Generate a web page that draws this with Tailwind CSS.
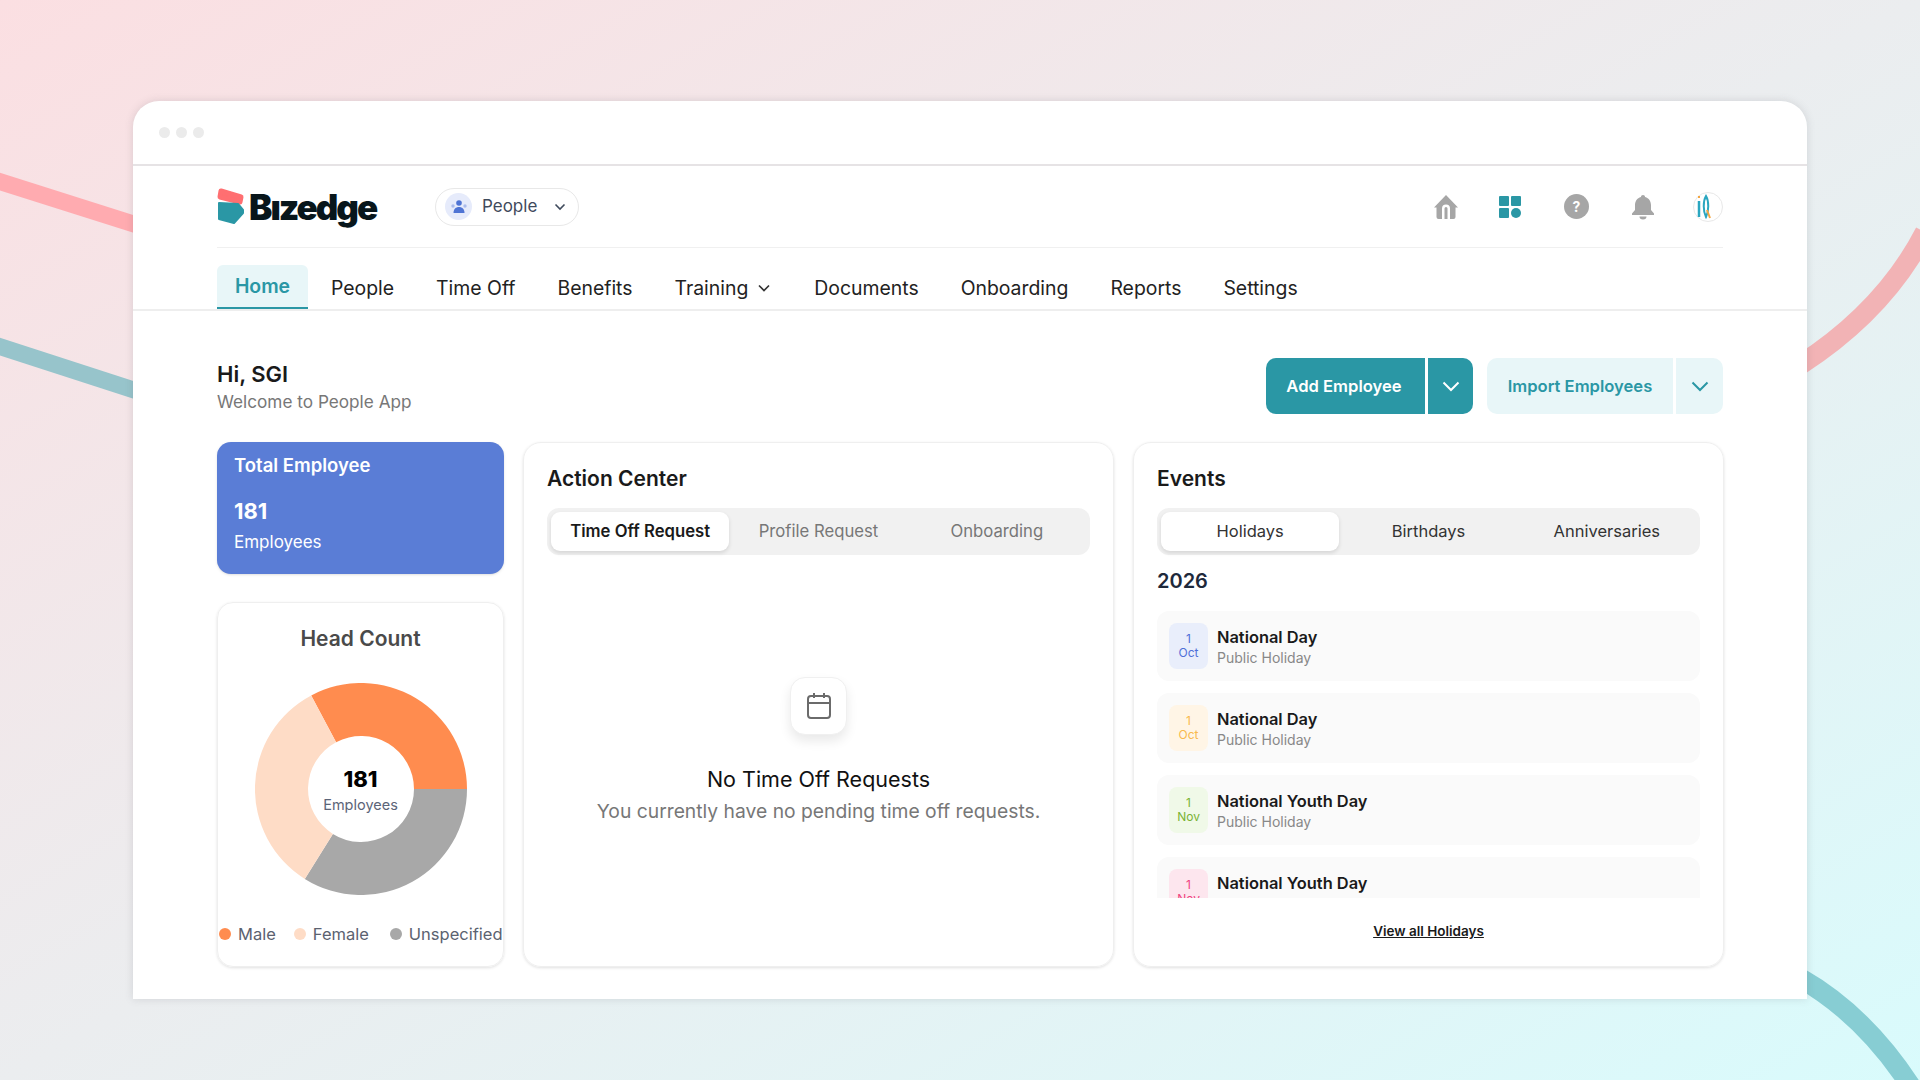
<!DOCTYPE html>
<html lang="en">
<head>
    <meta charset="UTF-8">
    <meta name="viewport" content="width=device-width, initial-scale=1.0">
    <title>Bizedge People</title>
    <script src="https://cdn.jsdelivr.net/npm/@tailwindcss/browser@4"></script>
</head>
<body class="relative w-[1920px] h-[1080px] overflow-hidden bg-linear-to-br from-[#fbdfe2] via-[#ebedef] to-[#d9fbfc] font-['Inter',sans-serif] text-[#1a1a1a]">
    <!-- Background stripes -->
    <svg class="absolute inset-0" width="1920" height="1080" viewBox="0 0 1920 1080" fill="none">
        <path d="M-5 180L140 226" stroke="#ffabb0" stroke-width="17"/>
        <path d="M-5 345L140 392" stroke="#97c4cb" stroke-width="17"/>
        <path d="M1800 365Q1885 310 1925 232" stroke="#f2b3b5" stroke-width="20"/>
        <path d="M1800 978Q1865 1015 1912 1088" stroke="#87cdd3" stroke-width="20"/>
    </svg>

    <div class="relative pt-[101px] pl-[133px]">
        <div class="w-[1674px] h-[898px] bg-white rounded-t-[26px] shadow-[0_0_8px_rgba(90,90,100,0.18)]">
            <!-- Window bar -->
            <div class="h-[65px] flex items-center gap-[6px] pl-[26px] border-b-2 border-[#e6e3e5]">
                <span class="w-[11px] h-[11px] rounded-full bg-[#ebebeb]"></span>
                <span class="w-[11px] h-[11px] rounded-full bg-[#ebebeb]"></span>
                <span class="w-[11px] h-[11px] rounded-full bg-[#ebebeb]"></span>
            </div>

            <!-- Top header -->
            <div class="px-[84px]">
                <div class="h-[82px] flex items-center justify-between border-b border-[#f0f0f0]">
                    <div class="flex items-center">
                        <div class="w-[218px] flex items-center gap-[4px]">
                            <svg width="28" height="40" viewBox="0 0 28 40">
                                <path d="M4 4L24 10L23 15L3 10Z" fill="#ff6f71" stroke="#ff6f71" stroke-width="5" stroke-linejoin="round"/>
                                <path d="M2 16L21 17L26 23L26 26L17 36L2 32Z" fill="#2a97a5" stroke="#2a97a5" stroke-width="2" stroke-linejoin="round"/>
                            </svg>
                            <span class="pt-[2px] text-[35px] leading-none font-black tracking-[-2px] text-[#08161b]">Bızedge</span>
                        </div>
                        <div class="w-[144px] h-[38px] flex items-center pl-[9px] rounded-full border border-[#e8e8e8]">
                            <span class="w-[27px] h-[27px] flex items-center justify-center rounded-full bg-[#e6ebfb]">
                                <svg width="18" height="16" viewBox="0 0 18 16" fill="#4f74d4">
                                    <circle cx="9" cy="4" r="2.8"/>
                                    <path d="M3.5 14c0-4 2.4-6 5.5-6s5.5 2 5.5 6z"/>
                                    <circle cx="3" cy="7" r="1.7" opacity=".4"/>
                                    <circle cx="15" cy="7" r="1.7" opacity=".4"/>
                                </svg>
                            </span>
                            <span class="ml-[10px] text-[17px] text-[#3f4a5c]">People</span>
                            <svg class="ml-[17px]" width="12" height="8" viewBox="0 0 12 8" fill="none" stroke="#3f4a5c" stroke-width="1.6"><path d="M1.5 1.5L6 6L10.5 1.5"/></svg>
                        </div>
                    </div>
                    <div class="flex items-center">
                        <svg class="mr-[39px]" width="26" height="26" viewBox="0 0 26 26" fill="#a6a6a6">
                            <path fill-rule="evenodd" d="M13 1L25 13.5L22.500 13.500V23a2 2 0 0 1-2 2H17V14.500a4 4 0 0 0-8 0V25H5.500a2 2 0 0 1-2-2V13.500H1zM11.500 14.500a1.500 1.500 0 0 1 3 0V25h-3z"/>
                        </svg>
                        <svg class="mr-[42px]" width="24" height="24" viewBox="0 0 24 24" fill="#2a97a5">
                            <rect x="1" y="1" width="10" height="10" rx="1"/>
                            <rect x="13" y="1" width="10" height="10" rx="1"/>
                            <rect x="1" y="13" width="10" height="10" rx="1"/>
                            <circle cx="18" cy="18" r="5"/>
                        </svg>
                        <span class="mr-[42px] w-[25px] h-[25px] flex items-center justify-center rounded-full bg-[#a6a6a6] text-white text-[14px] font-bold">?</span>
                        <svg class="mr-[38px]" width="24" height="26" viewBox="0 0 24 26" fill="#a6a6a6">
                            <path d="M12 1c1.200 0 2 .8 2.100 1.900C18 4 20 7.200 20 11v5l3 3.500V21H1v-1.500L4 16v-5c0-3.800 2-7 5.900-8.100C10 1.800 10.800 1 12 1z"/>
                            <path d="M8.500 22.500h7a3.500 3 0 0 1-7 0z"/>
                        </svg>
                        <span class="w-[30px] h-[30px] flex items-center pl-[2px] rounded-full border border-[#e8e8e8]">
                            <svg width="16" height="26" viewBox="0 0 16 26" fill="none">
                                <path d="M3 2v2" stroke="#f4a640" stroke-width="2"/>
                                <path d="M3 7v16" stroke="#2aa6c0" stroke-width="2.500"/>
                                <path d="M10 2c-3 5-3 15 0 21c3-6 3-16 0-21z" stroke="#2aa6c0" stroke-width="2"/>
                                <path d="M11 16l3 8" stroke="#f4a640" stroke-width="2"/>
                            </svg>
                        </span>
                    </div>
                </div>
            </div>

            <!-- Main nav -->
            <nav class="h-[63px] flex items-end px-[84px] border-b-2 border-[#eeeeee] text-[19.400px] text-[#222222]">
                <a class="w-[91px] h-[44px] flex items-center justify-center pt-[2px] rounded-t-[6px] bg-[#e8f6f8] border-b-2 border-[#2a97a5] font-semibold text-[#2a97a5]">Home</a>
                <div class="h-[44px] flex items-center pl-[23px] pt-[3px] gap-[42px]">
                    <a>People</a>
                    <a>Time Off</a>
                    <a>Benefits</a>
                    <a class="flex items-center gap-[10px]">Training
                        <svg width="12" height="8" viewBox="0 0 12 8" fill="none" stroke="#333333" stroke-width="1.700"><path d="M1 1.500L6 6.500L11 1.500"/></svg>
                    </a>
                    <a class="ml-[2px]">Documents</a>
                    <a>Onboarding</a>
                    <a>Reports</a>
                    <a>Settings</a>
                </div>
            </nav>

            <div class="px-[84px] pt-[47px]">
                <!-- Greeting and actions -->
                <div class="h-[56px] mb-[28px] flex items-center justify-between">
                    <div>
                        <h1 class="text-[22px] leading-[28px] font-semibold">Hi, SGI</h1>
                        <p class="mt-[4px] text-[17.200px] leading-[20px] text-[#777777]">Welcome to People App</p>
                    </div>
                    <div class="flex gap-[14px] h-[56px] text-[16.600px] font-semibold">
                        <div class="flex rounded-[10px] overflow-hidden bg-[#2a97a5] text-white">
                            <span class="w-[159px] flex items-center justify-center pr-[3px]">Add Employee</span>
                            <span class="w-[48px] flex items-center justify-center border-l-[3px] border-white">
                                <svg width="18" height="11" viewBox="0 0 18 11" fill="none" stroke="white" stroke-width="2"><path d="M1.500 1.500L9 9L16.500 1.500"/></svg>
                            </span>
                        </div>
                        <div class="flex rounded-[10px] overflow-hidden bg-[#e8f6f8] text-[#2a97a5]">
                            <span class="w-[186px] flex items-center justify-center">Import Employees</span>
                            <span class="w-[50px] flex items-center justify-center border-l-[3px] border-white">
                                <svg width="18" height="11" viewBox="0 0 18 11" fill="none" stroke="#2a97a5" stroke-width="2"><path d="M1.500 1.500L9 9L16.500 1.500"/></svg>
                            </span>
                        </div>
                    </div>
                </div>

                <!-- Cards -->
                <div class="grid grid-cols-[287px_591px_591px] gap-[19px] h-[525px]">
                    <div class="flex flex-col gap-[28px]">
                        <div class="h-[132px] px-[17px] pt-[12px] rounded-[14px] bg-[#5a7dd6] text-white shadow-sm">
                            <p class="text-[18.500px] leading-[22px] font-semibold">Total Employee</p>
                            <p class="mt-[21px] text-[22px] leading-[28px] font-bold">181</p>
                            <p class="mt-[6px] text-[17px] leading-[22px]">Employees</p>
                        </div>
                        <div class="flex-1 flex flex-col items-center pt-[23px] rounded-[16px] border border-[#efefef] shadow-[0_1px_3px_rgba(0,0,0,0.12)]">
                            <h2 class="text-[21px] leading-[26px] font-semibold text-[#4a4a4a]">Head Count</h2>
                            <div class="relative mt-[31px] w-[212px] h-[212px]">
                                <svg width="212" height="212" viewBox="-106 -106 212 212">
                                    <path d="M-49.800 -93.600A106 106 0 0 1 106 0L53 0A53 53 0 0 0 -24.900 -46.800Z" fill="#ff8c4f"/>
                                    <path d="M106 0A106 106 0 0 1 -56.200 89.900L-28.100 44.900A53 53 0 0 0 53 0Z" fill="#a8a8a8"/>
                                    <path d="M-56.200 89.900A106 106 0 0 1 -49.800 -93.600L-24.900 -46.800A53 53 0 0 0 -28.100 44.900Z" fill="#fedcc6"/>
                                </svg>
                                <div class="absolute inset-0 flex flex-col items-center justify-center">
                                    <span class="pt-[2px] text-[22px] leading-[28px] font-extrabold text-black">181</span>
                                    <span class="mt-[2px] text-[14.500px] leading-[20px] text-[#5c6478]">Employees</span>
                                </div>
                            </div>
                            <div class="w-full mt-[27px] pl-[1px] flex text-[16.500px] text-[#5b6270]">
                                <span class="flex items-center gap-[7px] mr-[18px]"><i class="w-[12px] h-[12px] rounded-full bg-[#ff8c4f]"></i>Male</span>
                                <span class="flex items-center gap-[7px] mr-[21px]"><i class="w-[12px] h-[12px] rounded-full bg-[#fedcc6]"></i>Female</span>
                                <span class="flex items-center gap-[7px]"><i class="w-[12px] h-[12px] rounded-full bg-[#a8a8a8]"></i>Unspecified</span>
                            </div>
                        </div>
                    </div>

                    <!-- Action center -->
                    <div class="px-[23px] pt-[23px] rounded-[18px] border border-[#efefef] shadow-[0_1px_3px_rgba(0,0,0,0.12)]">
                        <h2 class="text-[21px] leading-[26px] font-semibold">Action Center</h2>
                        <div class="mt-[16px] h-[47px] p-[4px] grid grid-cols-3 rounded-[12px] bg-[#f1f1f1] text-[16.700px] text-[#777777]">
                            <span class="flex items-center justify-center rounded-[9px] bg-white shadow-[0_2px_4px_rgba(0,0,0,0.12)] font-semibold text-[#1a1a1a]">Time Off Request</span>
                            <span class="flex items-center justify-center">Profile Request</span>
                            <span class="flex items-center justify-center">Onboarding</span>
                        </div>
                        <div class="mt-[122px] flex flex-col items-center">
                            <div class="w-[57px] h-[58px] flex items-center justify-center rounded-[15px] border border-[#f0f0f0] bg-white shadow-[0_6px_12px_rgba(0,0,0,0.09)]">
                                <svg width="26" height="28" viewBox="0 0 26 28" fill="none" stroke="#6b6b6b" stroke-width="2">
                                    <rect x="2" y="4" width="22" height="22" rx="3"/>
                                    <path d="M2 11H24M8 1V6M18 1V6"/>
                                </svg>
                            </div>
                            <h3 class="mt-[31px] text-[21.500px] leading-[26px] font-normal text-[#111111]">No Time Off Requests</h3>
                            <p class="mt-[6px] text-[19.300px] leading-[26px] text-[#777777]">You currently have no pending time off requests.</p>
                        </div>
                    </div>

                    <!-- Events -->
                    <div class="px-[23px] pt-[23px] rounded-[18px] border border-[#efefef] shadow-[0_1px_3px_rgba(0,0,0,0.12)]">
                        <h2 class="text-[21px] leading-[26px] font-semibold">Events</h2>
                        <div class="mt-[16px] h-[47px] p-[4px] grid grid-cols-3 rounded-[12px] bg-[#f1f1f1] text-[16.500px] text-[#333333]">
                            <span class="flex items-center justify-center rounded-[9px] bg-white shadow-[0_2px_4px_rgba(0,0,0,0.12)]">Holidays</span>
                            <span class="flex items-center justify-center">Birthdays</span>
                            <span class="flex items-center justify-center">Anniversaries</span>
                        </div>
                        <h3 class="mt-[13px] text-[20px] leading-[26px] font-semibold text-[#1e293b]">2026</h3>
                        <div class="mt-[17px] h-[287px] overflow-hidden flex flex-col gap-[12px]">
                            <div class="h-[70px] shrink-0 flex items-center gap-[9px] px-[12px] rounded-[12px] bg-[#fafafa]">
                                <div class="w-[39px] h-[46px] flex flex-col items-center justify-center rounded-[8px] bg-[#e9eefb] text-[12px] leading-[14px] text-[#4f6fd8]"><span>1</span><span>Oct</span></div>
                                <div class="pt-[2px]"><p class="text-[16.400px] leading-[20px] font-semibold">National Day</p><p class="text-[14px] leading-[21px] text-[#888888]">Public Holiday</p></div>
                            </div>
                            <div class="h-[70px] shrink-0 flex items-center gap-[9px] px-[12px] rounded-[12px] bg-[#fafafa]">
                                <div class="w-[39px] h-[46px] flex flex-col items-center justify-center rounded-[8px] bg-[#fff5e6] text-[12px] leading-[14px] text-[#f9b94d]"><span>1</span><span>Oct</span></div>
                                <div class="pt-[2px]"><p class="text-[16.400px] leading-[20px] font-semibold">National Day</p><p class="text-[14px] leading-[21px] text-[#888888]">Public Holiday</p></div>
                            </div>
                            <div class="h-[70px] shrink-0 flex items-center gap-[9px] px-[12px] rounded-[12px] bg-[#fafafa]">
                                <div class="w-[39px] h-[46px] flex flex-col items-center justify-center rounded-[8px] bg-[#f0f9e8] text-[12px] leading-[14px] text-[#7ab334]"><span>1</span><span>Nov</span></div>
                                <div class="pt-[2px]"><p class="text-[16.400px] leading-[20px] font-semibold">National Youth Day</p><p class="text-[14px] leading-[21px] text-[#888888]">Public Holiday</p></div>
                            </div>
                            <div class="h-[70px] shrink-0 flex items-center gap-[9px] px-[12px] rounded-[12px] bg-[#fafafa]">
                                <div class="w-[39px] h-[46px] flex flex-col items-center justify-center rounded-[8px] bg-[#fde6ee] text-[12px] leading-[14px] text-[#f0447f]"><span>1</span><span>Nov</span></div>
                                <div class="pt-[2px]"><p class="text-[16.400px] leading-[20px] font-semibold">National Youth Day</p><p class="text-[14px] leading-[21px] text-[#888888]">Public Holiday</p></div>
                            </div>
                        </div>
                        <p class="mt-[24px] text-center text-[13.500px] leading-[18px] font-semibold underline">View all Holidays</p>
                    </div>
                </div>
            </div>
        </div>
    </div>
</body>
</html>
